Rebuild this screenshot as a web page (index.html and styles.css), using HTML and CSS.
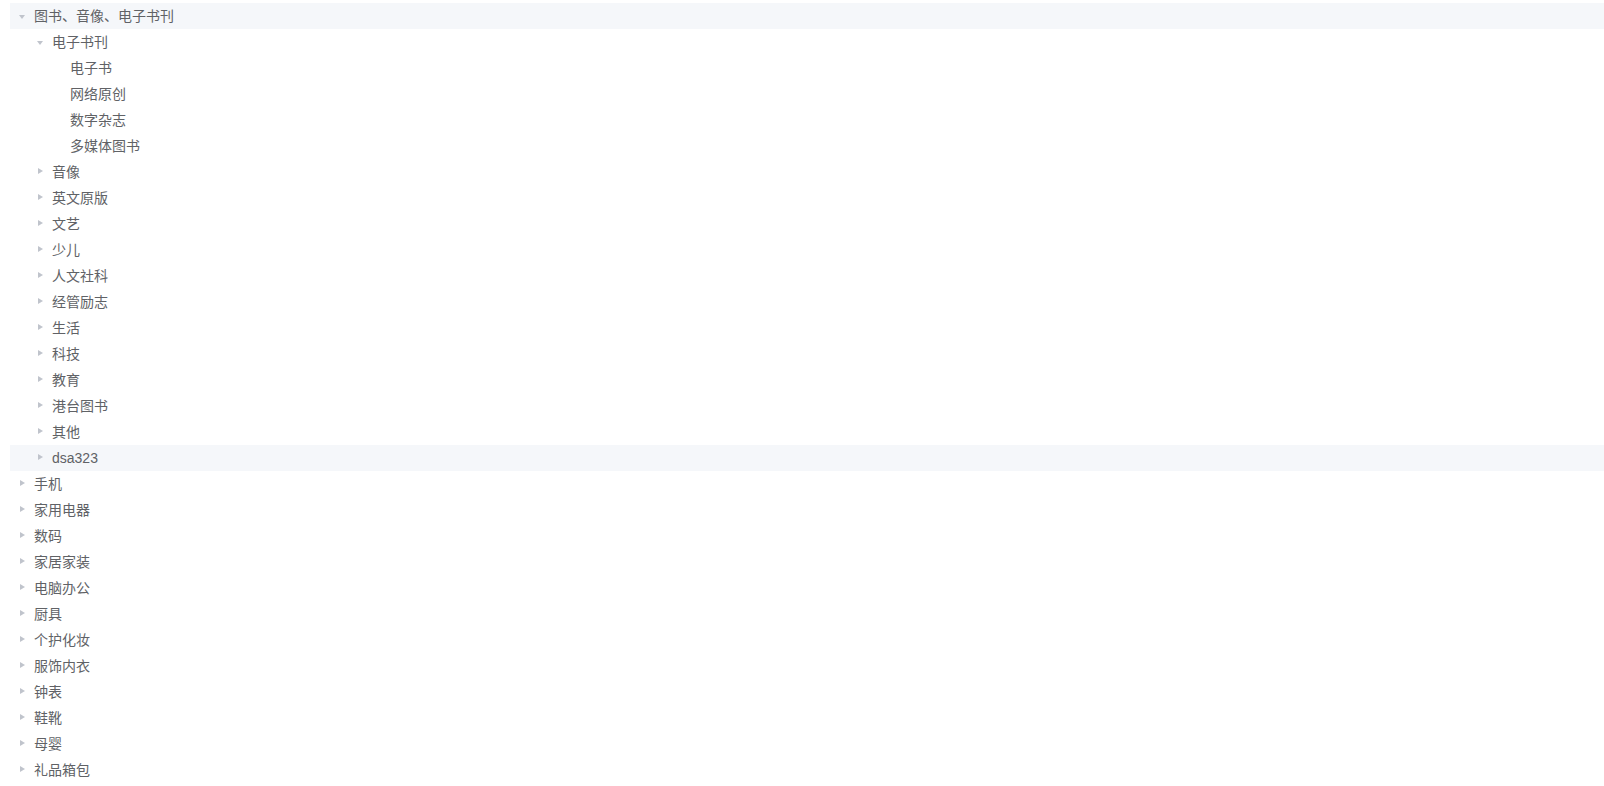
FILE: index.html
```html
<!DOCTYPE html>
<html lang="zh-CN">
<head>
    <meta charset="UTF-8">
    <title>分类树</title>
    <link rel="stylesheet" href="styles.css">
</head>
<body>
    <div class="tree">
        <div class="node">
            <div class="node-content current"><span class="caret open"></span><span class="label">图书、音像、电子书刊</span></div>
            <div class="children">
                <div class="node">
                    <div class="node-content"><span class="caret open"></span><span class="label">电子书刊</span></div>
                    <div class="children">
                        <div class="node"><div class="node-content"><span class="caret leaf"></span><span class="label">电子书</span></div></div>
                        <div class="node"><div class="node-content"><span class="caret leaf"></span><span class="label">网络原创</span></div></div>
                        <div class="node"><div class="node-content"><span class="caret leaf"></span><span class="label">数字杂志</span></div></div>
                        <div class="node"><div class="node-content"><span class="caret leaf"></span><span class="label">多媒体图书</span></div></div>
                    </div>
                </div>
                <div class="node"><div class="node-content"><span class="caret"></span><span class="label">音像</span></div></div>
                <div class="node"><div class="node-content"><span class="caret"></span><span class="label">英文原版</span></div></div>
                <div class="node"><div class="node-content"><span class="caret"></span><span class="label">文艺</span></div></div>
                <div class="node"><div class="node-content"><span class="caret"></span><span class="label">少儿</span></div></div>
                <div class="node"><div class="node-content"><span class="caret"></span><span class="label">人文社科</span></div></div>
                <div class="node"><div class="node-content"><span class="caret"></span><span class="label">经管励志</span></div></div>
                <div class="node"><div class="node-content"><span class="caret"></span><span class="label">生活</span></div></div>
                <div class="node"><div class="node-content"><span class="caret"></span><span class="label">科技</span></div></div>
                <div class="node"><div class="node-content"><span class="caret"></span><span class="label">教育</span></div></div>
                <div class="node"><div class="node-content"><span class="caret"></span><span class="label">港台图书</span></div></div>
                <div class="node"><div class="node-content"><span class="caret"></span><span class="label">其他</span></div></div>
                <div class="node"><div class="node-content hover"><span class="caret"></span><span class="label">dsa323</span></div></div>
            </div>
        </div>
        <div class="node"><div class="node-content"><span class="caret"></span><span class="label">手机</span></div></div>
        <div class="node"><div class="node-content"><span class="caret"></span><span class="label">家用电器</span></div></div>
        <div class="node"><div class="node-content"><span class="caret"></span><span class="label">数码</span></div></div>
        <div class="node"><div class="node-content"><span class="caret"></span><span class="label">家居家装</span></div></div>
        <div class="node"><div class="node-content"><span class="caret"></span><span class="label">电脑办公</span></div></div>
        <div class="node"><div class="node-content"><span class="caret"></span><span class="label">厨具</span></div></div>
        <div class="node"><div class="node-content"><span class="caret"></span><span class="label">个护化妆</span></div></div>
        <div class="node"><div class="node-content"><span class="caret"></span><span class="label">服饰内衣</span></div></div>
        <div class="node"><div class="node-content"><span class="caret"></span><span class="label">钟表</span></div></div>
        <div class="node"><div class="node-content"><span class="caret"></span><span class="label">鞋靴</span></div></div>
        <div class="node"><div class="node-content"><span class="caret"></span><span class="label">母婴</span></div></div>
        <div class="node"><div class="node-content"><span class="caret"></span><span class="label">礼品箱包</span></div></div>
    </div>
</body>
</html>
```

FILE: styles.css
```css
body {
    margin: 0;
    padding: 3px 0 0 10px;
    background-color: #fff;
    font-family: "Liberation Sans", "Noto Sans CJK SC", sans-serif;
    font-size: 14px;
    color: #606266;
}
.tree {
    background-color: #fff;
}
.node-content {
    display: flex;
    align-items: center;
    height: 26px;
}
.node-content.current,
.node-content.hover {
    background-color: #f5f7fa;
}
.children .node-content {
    padding-left: 18px;
}
.children .children .node-content {
    padding-left: 36px;
}
.caret {
    width: 24px;
    height: 26px;
    flex-shrink: 0;
    position: relative;
}
.caret::after {
    content: "";
    position: absolute;
    left: 10px;
    top: 9px;
    border-style: solid;
    border-width: 3.5px 0 3.5px 5px;
    border-color: transparent transparent transparent #c0c4cc;
}
.caret.open::after {
    left: 9px;
    top: 12px;
    border-width: 4px 3.5px 0 3.5px;
    border-color: #c0c4cc transparent transparent transparent;
}
.caret.leaf::after {
    display: none;
}
.label {
    line-height: 26px;
    white-space: nowrap;
}
```
